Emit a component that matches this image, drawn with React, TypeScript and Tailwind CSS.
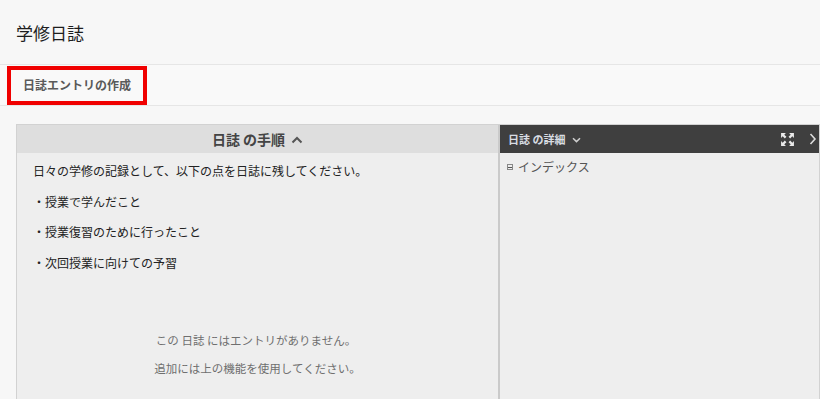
import React from "react";

const font = { fontFamily: '"Noto Sans CJK JP", "Noto Sans", sans-serif' };

export default function App() {
  return (
    <div className="w-[820px] h-[399px] overflow-hidden bg-[#f7f7f7] text-[#222]" style={font}>
      <div className="h-[64px] flex items-center pl-4">
        <h1 className="text-[17px] leading-none text-[#1e1e1e]">学修日誌</h1>
      </div>
      <div className="h-[42px] border-y border-[#e6e6e6] bg-[#f9f9f9] flex items-center">
        <div className="ml-[7px] w-[140px] h-[39px] border-4 border-[#f00000] flex items-center justify-center">
          <span className="text-[12px] font-bold text-[#5a5a5a] leading-none">日誌エントリの作成</span>
        </div>
      </div>
      <div className="mt-[18px] ml-4 flex border border-[#d2d2d2] h-[300px]">
        <div className="w-[481px] flex flex-col bg-[#eeeeee]">
          <div className="h-[28px] bg-[#dedede] flex items-center justify-center gap-[6px]">
            <span className="text-[14px] font-bold text-[#444] leading-none">日誌 の手順</span>
            <svg width="12" height="8" viewBox="0 0 12 8" className="mt-[1px]">
              <path d="M1.5 6.5 L6 2 L10.5 6.5" fill="none" stroke="#555" strokeWidth="2" />
            </svg>
          </div>
          <div className="pl-4 pt-[9px] text-[12px] text-[#222] leading-[18px] flex flex-col gap-[12.6px]">
            <p>日々の学修の記録として、以下の点を日誌に残してください。</p>
            <p>・授業で学んだこと</p>
            <p>・授業復習のために行ったこと</p>
            <p>・次回授業に向けての予習</p>
          </div>
          <div className="mt-[59px] flex flex-col items-center text-[11.5px] text-[#6f6f6f] leading-[18px] gap-[10px]">
            <p className="pr-[3px]">この 日誌 にはエントリがありません。</p>
            <p>追加には上の機能を使用してください。</p>
          </div>
        </div>
        <div className="flex-1 flex flex-col border-l-2 border-[#cacaca] bg-[#eeeeee]">
          <div className="h-[28px] bg-[#3f3f3f] flex items-center pl-2 pr-[2px]">
            <span className="text-[11px] font-bold text-[#d8dce2] leading-none">日誌 の詳細</span>
            <svg width="9" height="6" viewBox="0 0 9 6" className="ml-[6px] mt-[1px]">
              <path d="M1 1.2 L4.5 4.6 L8 1.2" fill="none" stroke="#cfcfcf" strokeWidth="1.5" />
            </svg>
            <div className="flex-1" />
            <svg width="15" height="15" viewBox="0 0 14 14" className="mr-[14px]">
              <g fill="#eaeaea">
                <path d="M1 1 H5.5 L4 2.5 L6 4.5 L4.5 6 L2.5 4 L1 5.5 Z" />
                <path d="M13 1 V5.5 L11.5 4 L9.5 6 L8 4.5 L10 2.5 L8.5 1 Z" />
                <path d="M1 13 V8.5 L2.5 10 L4.5 8 L6 9.5 L4 11.5 L5.5 13 Z" />
                <path d="M13 13 H8.5 L10 11.5 L8 9.5 L9.5 8 L11.5 10 L13 8.5 Z" />
              </g>
            </svg>
            <svg width="8" height="12" viewBox="0 0 8 12">
              <path d="M1.5 1 L6 6 L1.5 11" fill="none" stroke="#dcdcdc" strokeWidth="1.6" />
            </svg>
          </div>
          <div className="pl-[7px] pt-[6px] flex items-center gap-[5px]">
            <span className="w-[6px] h-[6px] border border-[#888] flex items-center justify-center">
              <span className="w-[4px] h-px bg-[#555]" />
            </span>
            <span className="text-[12px] text-[#555] leading-[16px]">インデックス</span>
          </div>
        </div>
      </div>
    </div>
  );
}
